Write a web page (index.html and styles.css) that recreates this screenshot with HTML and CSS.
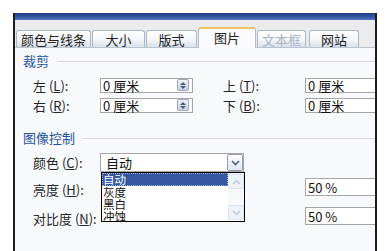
FILE: index.html
```html
<!DOCTYPE html>
<html>
<head>
<meta charset="utf-8">
<link rel="stylesheet" href="styles.css">
</head>
<body>
<div class="window">
  <div class="titlebar"></div>
  <div class="tabstrip">
    <div class="tab t1">颜色与线条</div>
    <div class="tab t2">大小</div>
    <div class="tab t3">版式</div>
    <div class="tab sel">图片</div>
    <div class="tab dis">文本框</div>
    <div class="tab t6">网站</div>
  </div>
  <div class="content">
    <div class="gtitle g1"><span>裁剪</span><i class="gline"></i></div>
    <div class="row crop r1">
      <div class="lbl">左 (<u>L</u>):</div>
      <div class="field spinf"><span>0 厘米</span><b class="spin"><i class="up"></i><i class="dn"></i></b></div>
      <div class="lbl2">上 (<u>T</u>):</div>
      <div class="field wide"><span>0 厘米</span></div>
    </div>
    <div class="row crop r2">
      <div class="lbl">右 (<u>R</u>):</div>
      <div class="field spinf"><span>0 厘米</span><b class="spin"><i class="up"></i><i class="dn"></i></b></div>
      <div class="lbl2">下 (<u>B</u>):</div>
      <div class="field wide"><span>0 厘米</span></div>
    </div>
    <div class="gtitle g2"><span>图像控制</span><i class="gline"></i></div>
    <div class="row r3">
      <div class="lbl">颜色 (<u>C</u>):</div>
      <div class="select">
        <span>自动</span>
        <b class="ddbtn"><svg width="9" height="6" viewBox="0 0 9 6"><path d="M1 1 L4.5 4.5 L8 1" fill="none" stroke="#4d6185" stroke-width="1.6"/></svg></b>
        <div class="droplist">
          <div class="items">
            <div class="item hl">自动</div>
            <div class="item">灰度</div>
            <div class="item">黑白</div>
            <div class="item">冲蚀</div>
          </div>
          <div class="sbar">
            <b class="sbtn"><svg width="9" height="6" viewBox="0 0 9 6"><path d="M1 5 L4.5 1.5 L8 5" fill="none" stroke="#bccbe0" stroke-width="1.5"/></svg></b>
            <b class="sbtn"><svg width="9" height="6" viewBox="0 0 9 6"><path d="M1 1 L4.5 4.5 L8 1" fill="none" stroke="#bccbe0" stroke-width="1.5"/></svg></b>
          </div>
        </div>
      </div>
    </div>
    <div class="row r4">
      <div class="lbl">亮度 (<u>H</u>):</div>
      <div class="gap"></div>
      <div class="field pct"><span>50 %</span></div>
    </div>
    <div class="row r5">
      <div class="lbl">对比度 (<u>N</u>):</div>
      <div class="gap"></div>
      <div class="field pct"><span>50 %</span></div>
    </div>
  </div>
</div>
</body>
</html>
```

FILE: styles.css
```css
* { box-sizing: border-box; }
html, body { margin: 0; padding: 0; background: #ffffff; }
body {
  font-family: "Noto Sans CJK SC", "Noto Sans", sans-serif;
  font-size: 13px;
  color: #222;
  width: 391px;
  height: 251px;
  overflow: hidden;
}
.window {
  margin: 13px 0 0 13px;
  width: 364px;
  height: 238px;
  border-left: 2px solid #1c1c1c;
  border-right: 2px solid #1c1c1c;
  background: #f8f9fc;
  display: flex;
  flex-direction: column;
  overflow: hidden;
}
.titlebar {
  height: 7px;
  background: linear-gradient(#1e3a7e, #3a5fae 70%, #5577c0);
  flex: none;
}
.tabstrip {
  height: 28px;
  flex: none;
  background: #ebebed;
  display: flex;
  align-items: flex-end;
  padding-left: 1px;
  border-bottom: 1px solid #b9c4d0;
}
.tab {
  height: 17px;
  margin-right: 1px;
  border: 1px solid #aab6c3;
  border-bottom: none;
  border-radius: 3px 3px 0 0;
  background: linear-gradient(#ffffff, #f4f6f9 55%, #d8e0ea);
  display: flex;
  align-items: center;
  justify-content: center;
  line-height: 1;
  color: #222;
}
.t1 { width: 75px; }
.t2 { width: 53px; }
.t3 { width: 51px; }
.sel {
  width: 58px;
  height: 21px;
  margin-bottom: -1px;
  border-top: 2px solid #f2bf63;
  border-color: #f2bf63 #b0bcc8 transparent #b0bcc8;
  background: #fbfbfd;
  padding-bottom: 2px;
}
.dis { width: 49px; color: #a9b6c6; margin-right: 3px; }
.t6 { width: 50px; }

.content {
  flex: 1;
  padding-left: 8px;
  display: flex;
  flex-direction: column;
}
.gtitle {
  height: 14px;
  display: flex;
  align-items: center;
  color: #2353a2;
  line-height: 14px;
}
.gtitle .gline {
  flex: 1;
  height: 1px;
  background: #d4d8e0;
  margin-left: 8px;
}
.g1 { margin-top: 6px; }
.g2 { margin-top: 18px; }
.row {
  display: flex;
  align-items: center;
  padding-left: 10px;
}
.crop { height: 15px; }
.r1 { margin-top: 10px; }
.r2 { margin-top: 5px; }
.r3 { margin-top: 8px; height: 19px; }
.r4 { margin-top: 6px; height: 18px; }
.r5 { margin-top: 11px; height: 18px; }
.lbl {
  width: 67px;
  flex: none;
  color: #262626;
  white-space: nowrap;
}
.lbl2 {
  width: 82px;
  margin-left: 30px;
  flex: none;
  color: #262626;
  white-space: nowrap;
}
.r4 .lbl, .r5 .lbl { position: relative; top: 2px; }
u { text-decoration: underline; text-underline-offset: 1px; }
.field {
  height: 100%;
  border: 1px solid #a5a5a5;
  background: #ffffff;
  display: flex;
  align-items: center;
  padding-left: 2px;
  flex: none;
  color: #111;
  line-height: 1;
}
.spinf { width: 93px; position: relative; }
.wide { width: 80px; }
.gap { width: 205px; flex: none; }
.pct { width: 80px; }
.spin {
  position: absolute;
  right: 3px;
  top: 0px;
  width: 12px;
  height: 12px;
  border: 1px solid #9ba8bd;
  border-radius: 2px;
  background: linear-gradient(#eef2f8, #c9d3e2);
  display: flex;
  flex-direction: column;
  align-items: center;
  justify-content: center;
  gap: 1px;
}
.spin i {
  width: 0; height: 0;
  border-left: 3px solid transparent;
  border-right: 3px solid transparent;
}
.spin .up { border-bottom: 3px solid #4a5a78; }
.spin .dn { border-top: 3px solid #4a5a78; }

.select {
  position: relative;
  width: 144px;
  height: 19px;
  border: 1px solid #a5a5a5;
  background: #fff;
  display: flex;
  align-items: center;
  padding-left: 5px;
  line-height: 1;
  color: #111;
}
.select span { flex: 1; }
.ddbtn {
  width: 16px;
  height: 17px;
  border: 1px solid #8f9fbd;
  border-radius: 2px;
  background: linear-gradient(#fbfcfe, #dfe6f1);
  display: flex;
  align-items: center;
  justify-content: center;
}
.droplist {
  position: absolute;
  left: 0;
  top: 18px;
  width: 144px;
  height: 50px;
  border: 1px solid #000;
  background: #fff;
  display: flex;
}
.items { flex: 1; display: flex; flex-direction: column; }
.item {
  height: 12px;
  line-height: 12px;
  padding-left: 1px;
  color: #111;
  font-size: 11.5px;
}
.item.hl {
  background: #33589f;
  color: #fff;
  outline: 1px dotted #9fb3dc;
  outline-offset: -1px;
  height: 13px;
  line-height: 13px;
}
.sbar {
  width: 16px;
  background: #f6f8fc;
  display: flex;
  flex-direction: column;
  justify-content: space-between;
  padding: 1px 0;
}
.sbtn {
  height: 15px;
  border: 1px solid #dbe4f1;
  border-radius: 2px;
  background: #eef3fa;
  display: flex;
  align-items: center;
  justify-content: center;
}
```
